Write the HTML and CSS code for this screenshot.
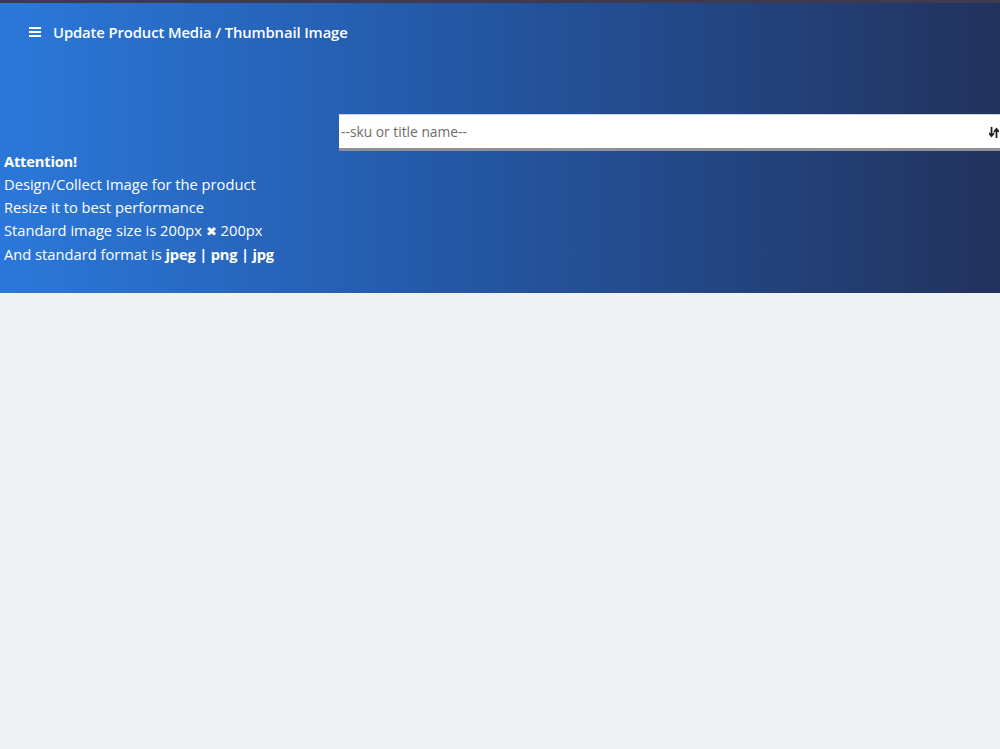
FILE: index.html
```html
<!DOCTYPE html>
<html>
<head>
<meta charset="utf-8">
<link rel="stylesheet" href="styles.css">
</head>
<body>
<div class="topline"></div>
<header class="hero">
  <div class="titlebar">
    <svg class="burger" width="12" height="10" viewBox="0 0 12 10"><rect y="0" width="12" height="2" fill="#fff"/><rect y="4" width="12" height="2" fill="#fff"/><rect y="8" width="12" height="2" fill="#fff"/></svg>
    <span class="title">Update Product Media / Thumbnail Image</span>
  </div>
  <div class="searchrow">
    <div class="search">
      <span class="placeholder">--sku or title name--</span>
      <svg class="sorticon" width="10" height="11" viewBox="0 0 10 11"><path d="M2.5 0v8M0 6l2.5 3 2.5-3" fill="none" stroke="#222" stroke-width="1.8"/><path d="M7.5 11V3M5 5l2.5-3 2.5 3" fill="none" stroke="#222" stroke-width="1.8"/></svg>
    </div>
  </div>
  <div class="notes">
    <b>Attention!</b><br>
    Design/Collect Image for the product<br>
    Resize it to best performance<br>
    Standard image size is 200px <span class="x">&#10006;</span> 200px<br>
    And standard format is <b>jpeg | png | jpg</b>
  </div>
</header>
<main class="content"></main>
</body>
</html>
```
FILE: styles.css
```css
html, body { margin: 0; padding: 0; }
body {
  background: #eff1f3;
  font-family: "Segoe UI", "Open Sans", "Noto Sans", sans-serif;
  width: 1000px;
  height: 749px;
  overflow: hidden;
}
.topline { height: 3px; background: #3e3a50; }
.hero {
  height: 290px;
  background: linear-gradient(90deg, #2b78da 0%, #2458a6 45%, #22325d 100%);
  color: #fff;
  display: flex;
  flex-direction: column;
}
.titlebar {
  display: flex;
  align-items: center;
  gap: 12px;
  padding: 19px 0 0 29px;
  height: 19px;
}
.burger { display: block; }
.title { font-weight: 600; font-size: 14.8px; letter-spacing: -0.1px; }
.searchrow {
  display: flex;
  margin-top: 74px;
  padding-left: 339px;
}
.search {
  flex: 1;
  height: 33px;
  background: #fff;
  border-bottom: 3px solid #8e9196;
  display: flex;
  align-items: center;
  justify-content: space-between;
  padding: 0 0 0 2px;
  box-shadow: 0 -1px 0 #d0d4da;
}
.placeholder { color: #6c6c6c; font-size: 13.8px; }
.sorticon { display: block; margin-right: 1px; margin-top: 1px; }
.notes {
  padding-left: 4px;
  font-size: 14.7px;
  line-height: 23px;
  margin-top: -1px;
}
.notes b { font-weight: 700; letter-spacing: -0.2px; }
.x { font-size: 13px; }
```
